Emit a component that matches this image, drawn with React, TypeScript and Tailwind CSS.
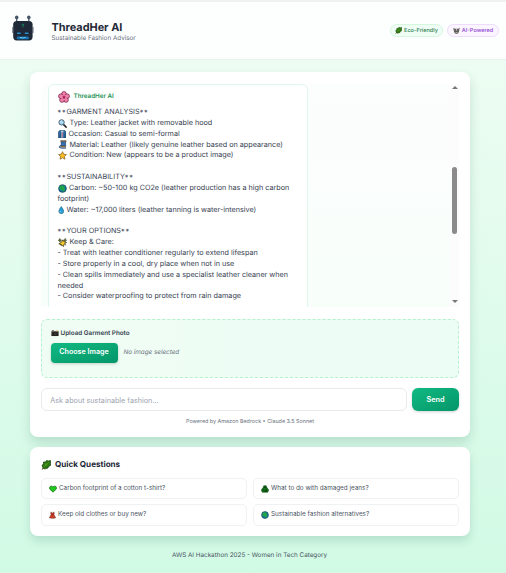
import { ReactNode } from 'react';

type IconProps = { className?: string };

const RobotLogo = () => (
  <svg viewBox="0 0 22 27" className="w-[22px] h-[27px]">
    <path d="M4.7 3v5M16.8 3v5" stroke="#475569" strokeWidth="1.3" />
    <circle cx="4.7" cy="2.4" r="1.8" fill="#475569" />
    <circle cx="16.8" cy="2.4" r="1.8" fill="#475569" />
    <rect x="1.2" y="6" width="19.4" height="19.4" rx="3.6" fill="#1f2937" />
    <path d="M0.8 12v6M21 12v6" stroke="#334155" strokeWidth="0.8" />
    <path d="M9.600 9.700q1.2-1 2.400 0q-.2 1-1.2 1.2v1.400" stroke="#168a5b" strokeWidth="0.9" fill="none" />
    <rect x="5" y="17.5" width="3.7" height="1.6" rx="0.6" fill="#2792ce" />
    <rect x="12.8" y="17.5" width="3.7" height="1.6" rx="0.6" fill="#2792ce" />
    <rect x="4.8" y="21.4" width="12" height="2.8" rx="1" fill="#1678b5" />
    <path d="M8 22.4q2.8 1.2 5.6 0" stroke="#8bdcff" strokeWidth="0.8" fill="none" />
  </svg>
);

const Leaf = ({ className }: IconProps) => (
  <svg viewBox="0 0 20 20" className={className}>
    <path d="M2 19l5-6" stroke="#65400c" strokeWidth="2.2" />
    <path d="M4 16L2 10l3-1 0-5 4 0 2-3 4 1 4-1 0 6 0 4-4 2-1 3-4 1-2 1z" fill="#2b7812" stroke="#164209" strokeWidth="1.4" />
    <path d="M5 14L16 4M9 6v4h4" stroke="#79b526" strokeWidth="0.9" fill="none" />
  </svg>
);

const RobotFace = ({ className }: IconProps) => (
  <svg viewBox="0 0 20 20" className={className}>
    <path d="M1 2l4 3h10l4-3-1 7-2 7-3 3H7l-3-3-2-7z" fill="#57534e" />
    <path d="M5 6h10v4H5z" fill="#d6d3d1" />
    <circle cx="7" cy="8" r="1.7" fill="#111827" />
    <circle cx="13" cy="8" r="1.7" fill="#111827" />
    <path d="M7 14h6v2H7z" fill="#e7e5e4" />
  </svg>
);

const Blossom = ({ className }: IconProps) => (
  <svg viewBox="0 0 20 20" className={className}>
    <g fill="#f184ad" stroke="#7c2449" strokeWidth="1.3">
      <circle cx="10" cy="4.8" r="3.9" />
      <circle cx="15.2" cy="8.7" r="3.9" />
      <circle cx="13.3" cy="15" r="3.9" />
      <circle cx="6.7" cy="15" r="3.9" />
      <circle cx="4.8" cy="8.7" r="3.9" />
    </g>
    <circle cx="10" cy="10.5" r="4.8" fill="#f184ad" />
    <path d="M10 10.5V7M10 10.5l3-1M10 10.5l2 3M10 10.5l-2 3M10 10.5L7 9.500" stroke="#a61e55" strokeWidth="1" />
    <circle cx="10" cy="10.5" r="1.6" fill="#8d1645" />
  </svg>
);

const Magnifier = ({ className }: IconProps) => (
  <svg viewBox="0 0 20 20" className={className}>
    <path d="M12 12l6 6" stroke="#27272a" strokeWidth="3.4" strokeLinecap="round" />
    <circle cx="8" cy="7.5" r="5.9" fill="#a5d8f3" stroke="#3d5366" strokeWidth="2" />
    <path d="M5 7q.6-2.6 3-2.8" stroke="#fff" strokeWidth="1.4" fill="none" />
  </svg>
);

const Jacket = ({ className }: IconProps) => (
  <svg viewBox="0 0 20 20" className={className}>
    <path d="M4 1h12l3 4v14H1V5z" fill="#2c6ca3" stroke="#17375a" strokeWidth="1.4" />
    <path d="M7 2h6l-1 5v11H8V7z" fill="#b9d8ec" />
    <path d="M10 5v13" stroke="#b83244" strokeWidth="1.8" />
    <path d="M5 8v10M15 8v10" stroke="#17375a" />
  </svg>
);

const Thread = ({ className }: IconProps) => (
  <svg viewBox="0 0 20 20" className={className}>
    <path d="M6 1h12v3H6zM6 13h11v3H6z" fill="#c6965c" stroke="#4b3524" strokeWidth="1" />
    <path d="M7 4h10v9H7z" fill="#235a9b" stroke="#132b4e" strokeWidth="1" />
    <path d="M8 7l8-1M8 10l8-1" stroke="#75aad8" />
    <path d="M7 12Q1 14 3 16.500q3 2.500 15 1.500" stroke="#163e72" strokeWidth="2" fill="none" />
  </svg>
);

const Star = ({ className }: IconProps) => (
  <svg viewBox="0 0 20 20" className={className}>
    <path d="M10 1.4l2.6 5.7 6.2.7-4.6 4.2 1.3 6.2-5.5-3.1-5.5 3.1L5.8 12 1.2 7.8l6.2-.7z" fill="#fbbd23" stroke="#80531a" strokeWidth="1.5" strokeLinejoin="round" />
  </svg>
);

const Globe = ({ className }: IconProps) => (
  <svg viewBox="0 0 20 20" className={className}>
    <circle cx="10" cy="10" r="8.6" fill="#1675a4" stroke="#173e4a" strokeWidth="1.5" />
    <path d="M4 5l5-2 6 2-1 4 2 3-3 5-4-3-4-1-2-5z" fill="#20a447" />
  </svg>
);

const Droplet = ({ className }: IconProps) => (
  <svg viewBox="0 0 16 20" className={className}>
    <path d="M8 1q6 7.500 6 11.500a6 6 0 0 1-12 0Q2 8.500 8 1z" fill="#269fd6" stroke="#164f74" strokeWidth="1.4" />
    <path d="M5 12q0 3 3 3.500" stroke="#a9e5ff" strokeWidth="1.6" fill="none" />
  </svg>
);

const Sparkles = ({ className }: IconProps) => (
  <svg viewBox="0 0 20 20" className={className}>
    <path d="M11 4l2 4 6 2-5 3-2 6-4-4-6-2 6-4z" fill="#f9c928" stroke="#3f3a18" strokeWidth="1.8" />
    <path d="M4 1l1.300 3L8 5 5.500 6.500 4 9 3 6 .5 5 3 4zM16 1l1 2.500L19 5l-2 1-1 2-1-2-2-1 2-1.500z" fill="#657b20" stroke="#292f13" strokeWidth="1.2" />
    <path d="M5 13l3 5M15 14l3 2" stroke="#3f3a18" strokeWidth="1.8" />
  </svg>
);

const Camera = ({ className }: IconProps) => (
  <svg viewBox="0 0 20 16" className={className}>
    <path d="M1 3h18v12H1z" fill="#292524" />
    <path d="M1 4h18M3 1h4v2H3z" stroke="#78716c" strokeWidth="1.500" />
    <circle cx="11" cy="9.500" r="4" fill="#57534e" stroke="#0c0a09" strokeWidth="1.500" />
    <circle cx="11" cy="9.500" r="1.500" fill="#111" />
    <path d="M12 1h5v2h-5z" fill="#d6a84b" />
  </svg>
);

const GreenHeart = ({ className }: IconProps) => (
  <svg viewBox="0 0 20 20" className={className}>
    <path d="M10 18L2 10.500Q-.5 6.500 3 3.500q4-2.500 7 1.500 3-4 7-1.500 3.500 3 1 7z" fill="#22c71f" stroke="#125b13" strokeWidth="1.500" />
  </svg>
);

const Recycle = ({ className }: IconProps) => (
  <svg viewBox="0 0 20 20" className={className}>
    <path d="M7 2h6l2 5 4 5-2 6H3l-2-6 4-5z" fill="#14701b" stroke="#0a3f0e" strokeWidth="1.400" strokeLinejoin="round" />
    <path d="M8 7l2-2 2 3M5 14l2-3M8 15h6l-1-4" stroke="#052908" strokeWidth="1.800" fill="none" />
  </svg>
);

const Dress = ({ className }: IconProps) => (
  <svg viewBox="0 0 20 20" className={className}>
    <path d="M6 1l1 3h6l1-3 1 5-1 3 5 9q-9 3-18 0l5-9-1-3z" fill="#cf3d28" stroke="#64251b" strokeWidth="1.400" />
    <path d="M7 9h6" stroke="#5b1d15" strokeWidth="1.500" />
  </svg>
);

const Line = ({ icon, children }: { icon?: ReactNode; children?: ReactNode }) => (
  <p className="flex items-center h-[10.85px] whitespace-nowrap">
    {icon}
    {children}
  </p>
);

// section titles come back as raw markdown
const Heading = ({ text }: { text: string }) => (
  <p className="flex items-center h-[10.85px] whitespace-nowrap">
    <span className="tracking-[0.850px] pt-[2px]">**</span>
    {text}
    <span className="tracking-[0.850px] pt-[2px]">**</span>
  </p>
);

const Question = ({ icon, text }: { icon: ReactNode; text: string }) => (
  <button className="flex items-center gap-[2.500px] h-[21.5px] pl-[6.500px] pt-[0.5px] rounded-[5px] border border-[#eff1f2] bg-white text-[6.330px] text-[#4b5563] whitespace-nowrap">
    {icon}
    {text}
  </button>
);

const questions = [
  { icon: <GreenHeart className="size-[8px]" />, text: 'Carbon footprint of a cotton t-shirt?' },
  { icon: <Recycle className="size-[8px]" />, text: 'What to do with damaged jeans?' },
  { icon: <Dress className="w-[7px] h-[8px]" />, text: 'Keep old clothes or buy new?' },
  { icon: <Globe className="size-[8px]" />, text: 'Sustainable fashion alternatives?' },
];

const Header = () => (
  <header className="h-[60px] border-t-2 border-t-[#eff2f3] border-b border-b-[#e5f5ec] bg-[#fdfffe] flex items-start">
    <div className="ml-[12px] mt-[13px]">
      <RobotLogo />
    </div>
    <div className="ml-[17.5px] mt-[17.500px]">
      <h1 className="text-[10.900px] leading-[14px] font-bold text-[#1f2937]">ThreadHer AI</h1>
      <p className="text-[6.320px] leading-[9px] text-[#6b7280]">Sustainable Fashion Advisor</p>
    </div>
    <div className="ml-auto mt-[22px] mr-[7px] flex gap-[4px] text-[5.550px] font-medium">
      <span className="flex items-center justify-center gap-[2px] w-[53px] h-[13px] pt-[0.5px] rounded-full border border-[#d5f7e0] bg-[#effdf4] text-[#2d8050]">
        <Leaf className="size-[7px]" />
        Eco-Friendly
      </span>
      <span className="flex items-center justify-center gap-[2px] w-[52px] h-[13px] pt-[0.5px] rounded-full border border-[#eedcfd] bg-[#faf5ff] text-[#8e43d0]">
        <RobotFace className="size-[7px]" />
        AI-Powered
      </span>
    </div>
  </header>
);

const ChatLog = () => (
  <div className="h-[223px] flex bg-linear-to-b from-[#fcfdfd] to-[#f8fffb] rounded-t-[5px] overflow-hidden">
    <div className="ml-[7px] w-[259.500px] h-[240px] rounded-t-[6px] border border-[#e0f7eb] bg-white pl-[8.500px] pt-[7px] text-[7.230px] text-[#374151]">
      <div className="flex items-center gap-[4px] h-[11px] mb-[4.500px] text-[6.250px] font-semibold text-[#279354]">
        <Blossom className="size-[12px]" />
        ThreadHer AI
      </div>
      <Heading text="GARMENT ANALYSIS" />
      <Line icon={<Magnifier className="size-[9px] mr-[3px]" />}>Type: Leather jacket with removable hood</Line>
      <Line icon={<Jacket className="size-[8.500px] mr-[2.500px]" />}>Occasion: Casual to semi-formal</Line>
      <Line icon={<Thread className="size-[9px] mr-[3px]" />}>Material: Leather (likely genuine leather based on appearance)</Line>
      <Line icon={<Star className="size-[9px] mr-[3px]" />}>Condition: New (appears to be a product image)</Line>
      <Line />
      <Heading text="SUSTAINABILITY" />
      <Line icon={<Globe className="size-[9px] mr-[2.500px]" />}>Carbon: ~50-100 kg CO2e (leather production has a high carbon</Line>
      <Line>footprint)</Line>
      <Line icon={<Droplet className="w-[6.500px] h-[8.500px] mr-[2.500px]" />}>Water: ~17,000 liters (leather tanning is water-intensive)</Line>
      <Line />
      <Heading text="YOUR OPTIONS" />
      <Line icon={<Sparkles className="size-[9px] mr-[3px]" />}>Keep &amp; Care:</Line>
      <Line>- Treat with leather conditioner regularly to extend lifespan</Line>
      <Line>- Store properly in a cool, dry place when not in use</Line>
      <Line>- Clean spills immediately and use a specialist leather cleaner when</Line>
      <Line>needed</Line>
      <Line>- Consider waterproofing to protect from rain damage</Line>
    </div>
    <div className="ml-auto w-[9px] bg-[#fcfcfc] flex flex-col items-center">
      <span className="mt-[2px] border-x-[3px] border-x-transparent border-b-[3px] border-b-[#777]" />
      <span className="mt-[78px] w-[5px] h-[67px] rounded-full bg-[#8b8b8b]" />
      <span className="mt-[66.500px] border-x-[3px] border-x-transparent border-t-[3px] border-t-[#777]" />
    </div>
  </div>
);

const UploadBox = () => (
  <div className="mt-[12px] h-[59px] rounded-[6px] border border-dashed border-[#b5f1cb] bg-linear-to-r from-[#f0fdf4] to-[#ecfdf5] pl-[8.500px] pt-[9px]">
    <div className="flex items-center gap-[2px] h-[10px] text-[6.320px] font-semibold text-[#374151]">
      <Camera className="w-[8px] h-[6.500px]" />
      Upload Garment Photo
    </div>
    <div className="mt-[4px] flex items-center gap-[6px]">
      <button className="w-[67px] h-[20px] rounded-[4px] bg-linear-to-br from-[#10b981] to-[#059669] text-white text-[7.150px] font-semibold shadow-[0_1px_3px_rgba(0,0,0,0.18)]">
        Choose Image
      </button>
      <span className="text-[6.300px] italic text-[#6b7280]">No image selected</span>
    </div>
  </div>
);

const App = () => {
  return (
    <div className="w-[506px] h-[573px] overflow-hidden bg-linear-to-b from-[#f0fdf4] to-[#d1fae5] font-['Inter',sans-serif] [text-rendering:geometricPrecision]">
      <Header />

      <main className="mx-[30px] w-[440px]">
        <section className="mt-[11.500px] h-[365px] rounded-[8px] bg-[#fefffe] px-[11px] pt-[12px] shadow-[0_6px_12px_rgba(6,78,59,0.16)]">
          <ChatLog />
          <UploadBox />
          <div className="mt-[10.500px] flex gap-[5px]">
            <input
              placeholder="Ask about sustainable fashion..."
              className="w-[366px] h-[23px] pt-px rounded-[6px] border border-[#e8ebed] bg-white px-[8.300px] text-[7.230px] placeholder:text-[#9ca3af] outline-none"
            />
            <button className="w-[47px] h-[23px] pt-px rounded-[6px] bg-linear-to-br from-[#10b981] to-[#059669] text-white text-[7.300px] font-semibold shadow-[0_1px_3px_rgba(0,0,0,0.18)]">
              Send
            </button>
          </div>
          <p className="mt-[6.800px] text-center text-[5.400px] leading-[9px] text-[#6b7280]">
            Powered by Amazon Bedrock • Claude 3.5 Sonnet
          </p>
        </section>

        <section className="mt-[10.500px] h-[89px] rounded-[8px] bg-[#fefffe] px-[11px] pt-[11px] shadow-[0_5px_10px_rgba(6,78,59,0.15)]">
          <h2 className="flex items-center gap-[4px] h-[13px] text-[8.080px] font-bold text-[#1f2937]">
            <Leaf className="size-[10px]" />
            Quick Questions
          </h2>
          <div className="mt-[6.500px] grid grid-cols-2 gap-x-[6px] gap-y-[5px]">
            {questions.map((q) => (
              <Question key={q.text} icon={q.icon} text={q.text} />
            ))}
          </div>
        </section>
      </main>

      <footer className="mt-[14px] pr-[7px] text-center text-[6.320px] leading-[10px] text-[#4b5563]">
        AWS AI Hackathon 2025 - Women in Tech Category
      </footer>
    </div>
  );
};

export default App;
